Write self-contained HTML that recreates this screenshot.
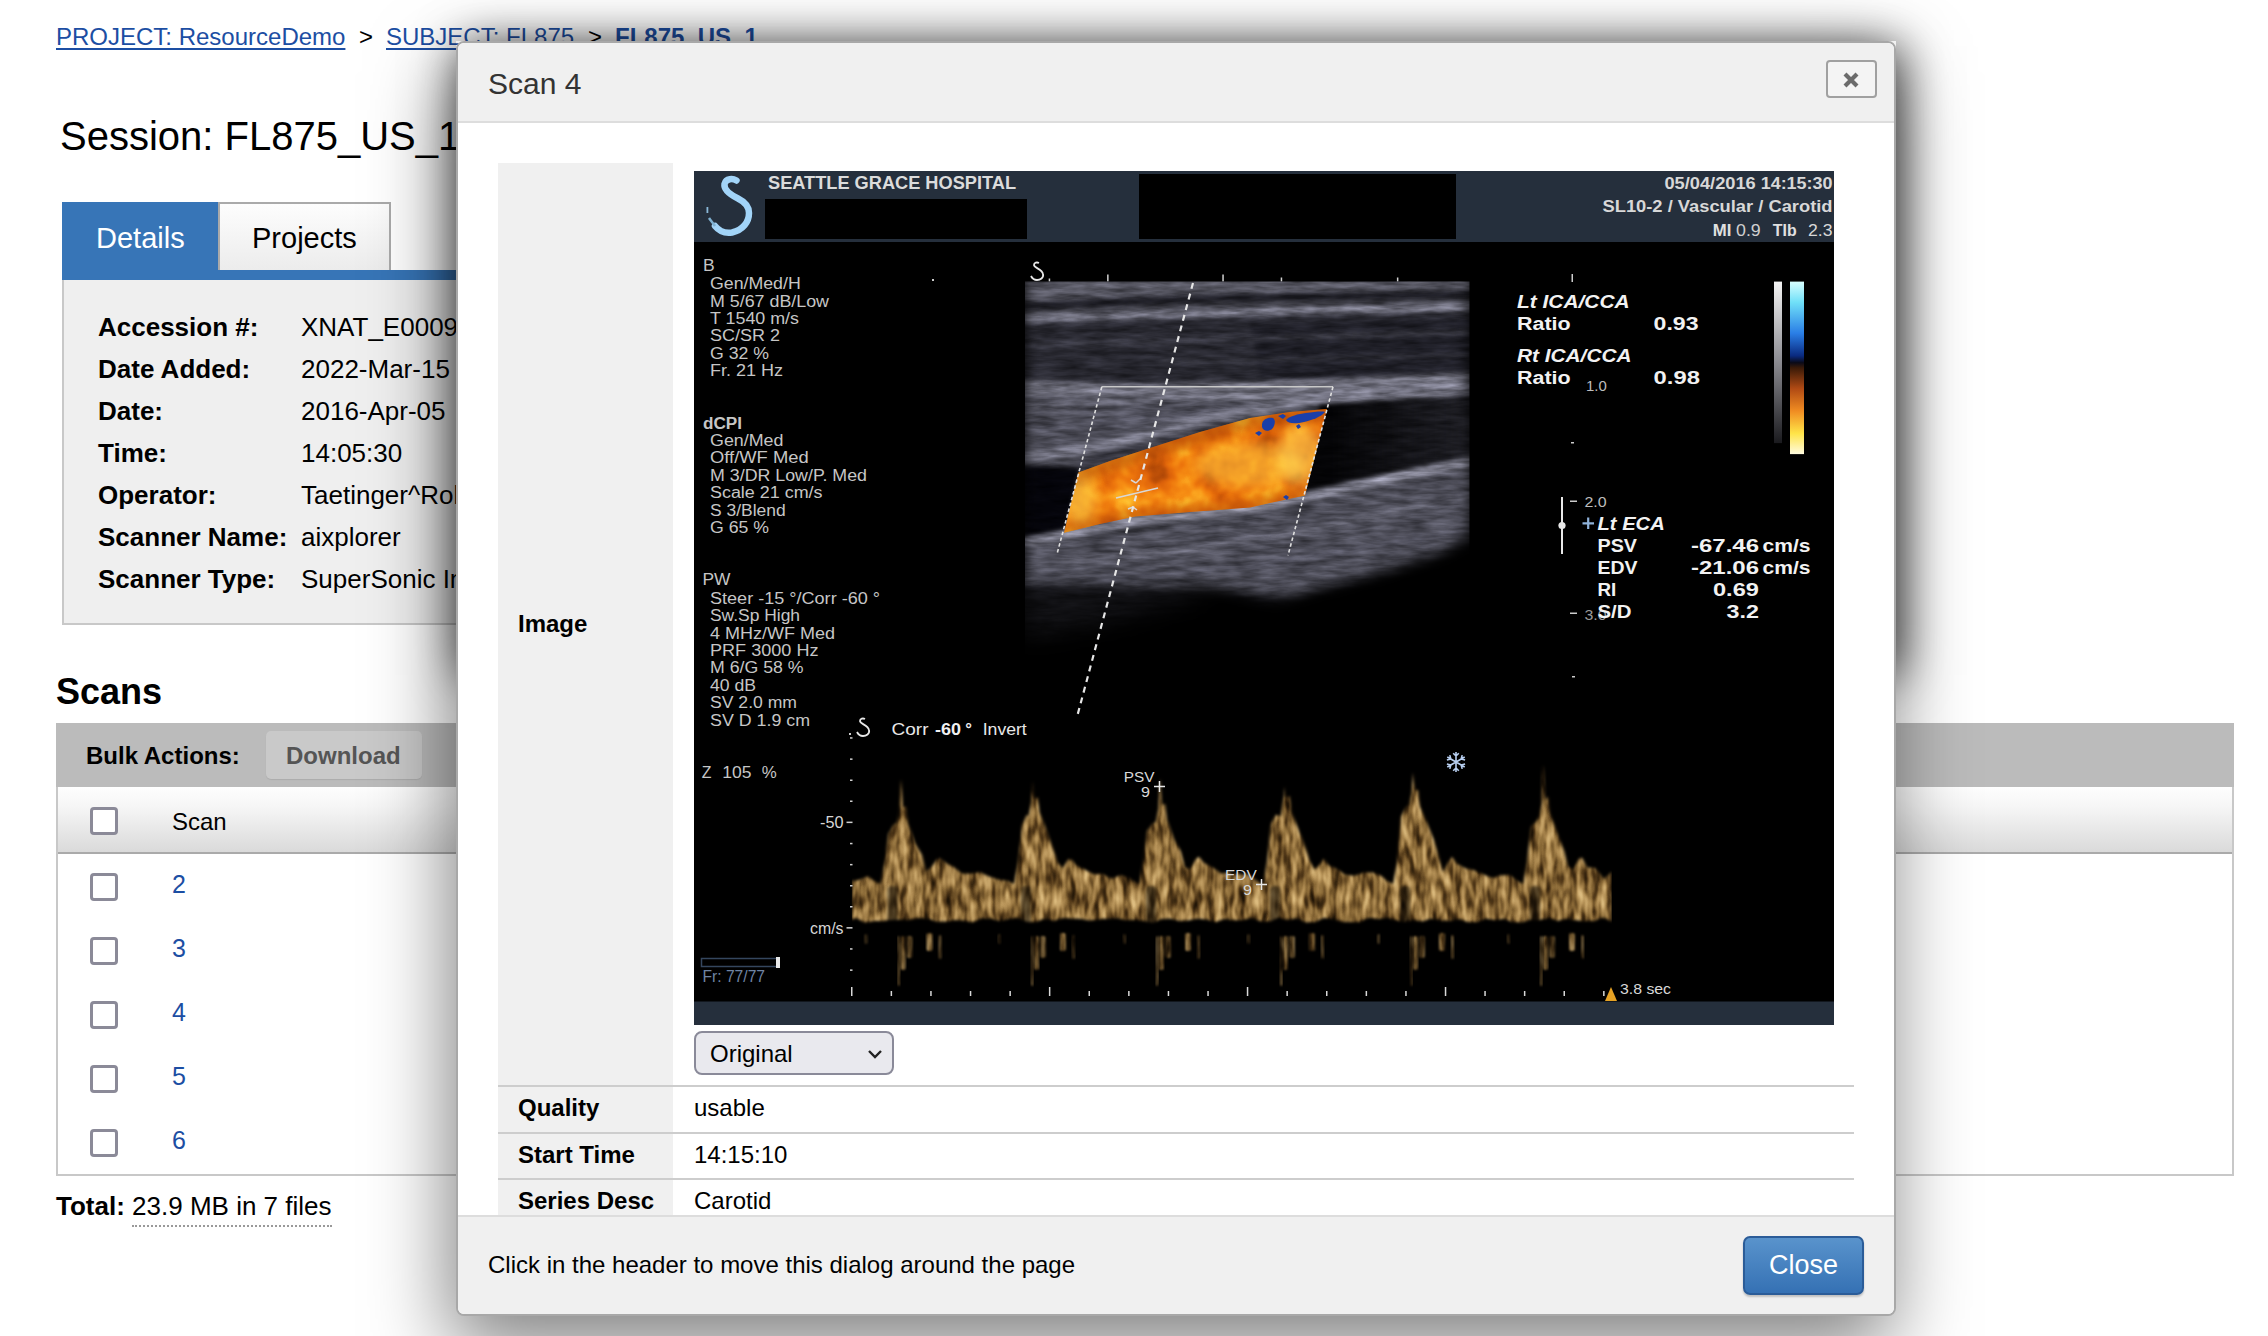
<!DOCTYPE html>
<html><head><meta charset="utf-8">
<style>
html,body{margin:0;padding:0;width:2268px;height:1336px;overflow:hidden;background:#fff;}
body{font-family:"Liberation Sans",sans-serif;color:#000;position:relative;}
.a{position:absolute;white-space:nowrap;}
.lnk{color:#1c4ea3;text-decoration:underline;text-decoration-thickness:2px;text-underline-offset:3px;}
.bc{font-size:24px;line-height:24px;top:25px;}
.lbl{font-weight:bold;font-size:26px;line-height:26px;}
.val{font-size:26px;line-height:26px;}
.cb{position:absolute;left:90px;width:22px;height:22px;border:3px solid #8b8a98;border-radius:4px;background:#fff;}
.rowlnk{position:absolute;left:172px;font-size:25px;line-height:25px;color:#1c4ea3;}
#dlg{position:absolute;left:456px;top:41px;width:1436px;height:1271px;border:2px solid #a8a8a8;border-radius:8px;background:#fff;box-shadow:-6px 30px 80px rgba(0,0,0,0.5);overflow:hidden;}
.dl{font-weight:bold;font-size:24px;line-height:24px;}
.dv{font-size:24px;line-height:24px;}
</style></head><body>
<!-- breadcrumb -->
<div class="a bc" style="left:56px;"><span class="lnk">PROJECT: ResourceDemo</span></div>
<div class="a bc" style="left:359px;">&gt;</div>
<div class="a bc" style="left:386px;"><span class="lnk">SUBJECT: FL875</span></div>
<div class="a bc" style="left:588px;">&gt;</div>
<div class="a bc" style="left:615px;font-weight:bold;color:#1c4ea3;">FL875_US_1</div>

<div class="a" style="left:60px;top:116px;font-size:40px;line-height:40px;">Session: FL875_US_1</div>

<!-- tabs -->
<div class="a" style="left:62px;top:202px;width:156px;height:78px;background:#3775b7;"></div>
<div class="a" style="left:218px;top:270px;width:1600px;height:10px;background:#3775b7;"></div>
<div class="a" style="left:218px;top:202px;width:169px;height:66px;border:2px solid #aaa;border-bottom:none;background:linear-gradient(#fdfdfd,#ececec);"></div>
<div class="a" style="left:96px;top:224px;font-size:29px;line-height:29px;color:#fff;">Details</div>
<div class="a" style="left:252px;top:224px;font-size:29px;line-height:29px;">Projects</div>
<div class="a" style="left:62px;top:280px;width:1700px;height:343px;background:#efefef;border:2px solid #c8c8c8;border-top:none;"></div>
<div class="a lbl" style="left:98px;top:314px;">Accession #:</div>
<div class="a val" style="left:301px;top:314px;">XNAT_E00091</div>
<div class="a lbl" style="left:98px;top:356px;">Date Added:</div>
<div class="a val" style="left:301px;top:356px;">2022-Mar-15</div>
<div class="a lbl" style="left:98px;top:398px;">Date:</div>
<div class="a val" style="left:301px;top:398px;">2016-Apr-05</div>
<div class="a lbl" style="left:98px;top:440px;">Time:</div>
<div class="a val" style="left:301px;top:440px;">14:05:30</div>
<div class="a lbl" style="left:98px;top:482px;">Operator:</div>
<div class="a val" style="left:301px;top:482px;">Taetinger^Robert</div>
<div class="a lbl" style="left:98px;top:524px;">Scanner Name:</div>
<div class="a val" style="left:301px;top:524px;">aixplorer</div>
<div class="a lbl" style="left:98px;top:566px;">Scanner Type:</div>
<div class="a val" style="left:301px;top:566px;">SuperSonic Imagine</div>

<!-- scans -->
<div class="a" style="left:56px;top:674px;font-size:36px;line-height:36px;font-weight:bold;">Scans</div>
<div class="a" style="left:56px;top:723px;width:2178px;height:64px;background:#bbb;"></div>
<div class="a" style="left:86px;top:744px;font-size:24px;line-height:24px;font-weight:bold;">Bulk Actions:</div>
<div class="a" style="left:266px;top:731px;width:156px;height:48px;border-radius:5px;background:#c9c9c9;box-shadow:0 1px 1px rgba(0,0,0,0.08);"></div>
<div class="a" style="left:286px;top:744px;font-size:24px;line-height:24px;font-weight:bold;color:#555;">Download</div>
<div class="a" style="left:56px;top:787px;width:2174px;height:387px;border:2px solid #c8c8c8;border-top:none;"></div>
<div class="a" style="left:58px;top:787px;width:2174px;height:65px;background:linear-gradient(#fefefe,#f6f6f6 30%,#dadada);border-bottom:2px solid #aaa;"></div>
<div class="cb" style="top:807px;"></div>
<div class="a" style="left:172px;top:810px;font-size:24px;line-height:24px;">Scan</div>
<div class="cb" style="top:873px;"></div><div class="rowlnk" style="top:872px;">2</div>
<div class="cb" style="top:937px;"></div><div class="rowlnk" style="top:936px;">3</div>
<div class="cb" style="top:1001px;"></div><div class="rowlnk" style="top:1000px;">4</div>
<div class="cb" style="top:1065px;"></div><div class="rowlnk" style="top:1064px;">5</div>
<div class="cb" style="top:1129px;"></div><div class="rowlnk" style="top:1128px;">6</div>
<div class="a" style="left:56px;top:1193px;font-size:26px;line-height:26px;"><b>Total:</b> <span style="border-bottom:2px dotted #999;padding-bottom:4px;">23.9 MB in 7 files</span></div>

<!-- dialog -->
<div class="a" style="left:456px;top:41px;width:1440px;height:629px;box-shadow:5px 5px 44px rgba(0,0,0,0.75);"></div>
<div id="dlg">
  <div class="a" style="left:0;top:0;width:1436px;height:78px;background:#f0f0f0;border-bottom:2px solid #ddd;"></div><div class="a" style="left:1px;top:1px;">
  <div class="a" style="left:29px;top:25px;font-size:30px;line-height:30px;color:#333;">Scan 4</div>
  <div class="a" style="left:1367px;top:16px;width:47px;height:34px;border:2px solid #a0a0a0;border-radius:4px;background:#f4f4f4;"></div><svg class="a" style="left:1383px;top:27px;" width="18" height="18" viewBox="0 0 18 18"><path d="M3 3 L15 15 M15 3 L3 15" stroke="#6b6b6b" stroke-width="4.2" stroke-linecap="butt"/></svg>
  <div class="a" style="left:39px;top:119px;width:175px;height:1052px;background:#f0f0f0;"></div>
  <div id="us" class="a" style="left:235px;top:127px;width:1140px;height:854px;background:#000;"><svg width="1140" height="854" viewBox="694 171 1140 854" style="display:block">
<defs>
<filter id="bmtex" color-interpolation-filters="sRGB" x="1020" y="276" width="455" height="380" filterUnits="userSpaceOnUse">
<feGaussianBlur in="SourceGraphic" stdDeviation="2.2" result="b"/>
<feTurbulence type="fractalNoise" baseFrequency="0.035 0.18" numOctaves="3" seed="11" result="n"/>
<feColorMatrix in="n" type="matrix" values="1 0 0 0 0  1 0 0 0 0  1 0 0 0 0  0 0 0 0 1" result="g"/>
<feComposite in="b" in2="g" operator="arithmetic" k1="1.0" k2="0.52" k3="0" k4="-0.015"/>
</filter>
<filter id="bmblur" color-interpolation-filters="sRGB" x="1000" y="260" width="500" height="420" filterUnits="userSpaceOnUse"><feGaussianBlur stdDeviation="7"/></filter><filter id="bmblur2" color-interpolation-filters="sRGB" x="1000" y="540" width="260" height="130" filterUnits="userSpaceOnUse"><feGaussianBlur stdDeviation="12"/></filter>
<filter id="vtex" color-interpolation-filters="sRGB" x="1050" y="395" width="290" height="150" filterUnits="userSpaceOnUse">
<feTurbulence type="fractalNoise" baseFrequency="0.035" numOctaves="3" seed="5" result="n0"/>
<feColorMatrix in="n0" type="matrix" values="1 0 0 0 0  1 0 0 0 0  1 0 0 0 0  0 0 0 0 1" result="n"/>
<feComponentTransfer in="n" result="c">
<feFuncR type="table" tableValues="0.55 0.72 0.86 0.93 0.97 1 1"/>
<feFuncG type="table" tableValues="0.2 0.3 0.38 0.46 0.56 0.72 0.88"/>
<feFuncB type="table" tableValues="0.02 0.03 0.04 0.05 0.08 0.16 0.3"/>
<feFuncA type="table" tableValues="1 1"/>
</feComponentTransfer>
<feComposite in="c" in2="SourceGraphic" operator="in"/>
</filter>
<filter id="wtex" color-interpolation-filters="sRGB" x="845" y="755" width="775" height="240" filterUnits="userSpaceOnUse">
<feTurbulence type="fractalNoise" baseFrequency="0.13 0.045" numOctaves="2" seed="3" result="n0"/>
<feColorMatrix in="n0" type="matrix" values="1 0 0 0 0  1 0 0 0 0  1 0 0 0 0  0 0 0 0 1" result="n"/>
<feComponentTransfer in="n" result="c">
<feFuncR type="table" tableValues="0.03 0.14 0.33 0.55 0.72 0.85 0.94"/>
<feFuncG type="table" tableValues="0.02 0.09 0.23 0.42 0.58 0.72 0.82"/>
<feFuncB type="table" tableValues="0 0.03 0.1 0.22 0.35 0.48 0.6"/>
<feFuncA type="table" tableValues="1 1"/>
</feComponentTransfer>
<feComposite in="c" in2="SourceGraphic" operator="in"/>
</filter>
<filter id="soft" color-interpolation-filters="sRGB" x="-20%" y="-20%" width="140%" height="140%"><feGaussianBlur stdDeviation="1.6"/></filter>
<filter id="soft2" color-interpolation-filters="sRGB" x="-20%" y="-20%" width="140%" height="140%"><feGaussianBlur stdDeviation="1"/></filter><filter id="soft3" color-interpolation-filters="sRGB" x="-50%" y="-50%" width="200%" height="200%"><feGaussianBlur stdDeviation="6"/></filter>
<mask id="bmmask" maskUnits="userSpaceOnUse" x="1000" y="260" width="500" height="420">
<rect x="1000" y="260" width="500" height="420" fill="#000"/>
<g filter="url(#bmblur)"><path d="M1025 270 H1469.5 V535 L1440 552 L1380 572 L1330 585 L1275 600 L1240 592 L1200 584 L1140 586 L1080 584 L1025 588 Z" fill="#fff"/></g><g filter="url(#bmblur2)"><path d="M1025 575 L1215 578 L1190 598 L1130 614 L1070 628 L1025 636 Z" fill="#fff" fill-opacity="0.42"/></g>
<rect x="1000" y="260" width="25" height="420" fill="#000"/>
<rect x="1469.5" y="260" width="40" height="420" fill="#000"/>
<rect x="1000" y="260" width="500" height="21.5" fill="#000"/>
</mask>
</defs>
<rect x="694" y="171" width="1140" height="854" fill="#000"/>
<rect x="694" y="171" width="1140" height="71" fill="#252f3c"/>
<rect x="765" y="199" width="262" height="40" fill="#000"/>
<rect x="1139" y="174" width="317" height="65" fill="#000"/>
<rect x="694" y="1001.5" width="1140" height="23.5" fill="#252f3c"/>
<path d="M736.5 180.5 C733 178.5 726 178 724.5 184 C723.5 190 730 194.5 738 198.5 C746 202.5 749 207 749 213 C749 222 743 230 732 232.5 C725 233.5 719 231 715 226" fill="none" stroke="#a2d4f8" stroke-width="6.5" stroke-linecap="round"/><path d="M715 226 C713 223 711 221 709 218" fill="none" stroke="#7fb0d0" stroke-width="2.5"/><rect x="706.5" y="207" width="1.8" height="6" fill="#8ab8d8"/>
<text x="768" y="188.5" font-family="Liberation Sans" font-size="17.5" font-weight="bold" font-style="normal" fill="#dcdcdc" text-anchor="start" textLength="248" lengthAdjust="spacingAndGlyphs">SEATTLE GRACE HOSPITAL</text>
<text x="1664.4" y="188.5" font-family="Liberation Sans" font-size="17" font-weight="bold" font-style="normal" fill="#d8d8d8" text-anchor="start" textLength="91.4" lengthAdjust="spacingAndGlyphs">05/04/2016</text>
<text x="1760.7" y="188.5" font-family="Liberation Sans" font-size="17" font-weight="bold" font-style="normal" fill="#d8d8d8" text-anchor="start" textLength="71.8" lengthAdjust="spacingAndGlyphs">14:15:30</text>
<text x="1602.5" y="212.3" font-family="Liberation Sans" font-size="17" font-weight="bold" font-style="normal" fill="#d8d8d8" text-anchor="start" textLength="230" lengthAdjust="spacingAndGlyphs">SL10-2 / Vascular / Carotid</text>
<text x="1712.7" y="235.8" font-family="Liberation Sans" font-size="17" font-weight="bold" font-style="normal" fill="#e0e0e0" text-anchor="start" textLength="18.6" lengthAdjust="spacingAndGlyphs">MI</text>
<text x="1736" y="235.8" font-family="Liberation Sans" font-size="17" font-weight="normal" font-style="normal" fill="#d0d0d0" text-anchor="start" textLength="24.7" lengthAdjust="spacingAndGlyphs">0.9</text>
<text x="1772.8" y="235.8" font-family="Liberation Sans" font-size="17" font-weight="bold" font-style="normal" fill="#e0e0e0" text-anchor="start" textLength="23.8" lengthAdjust="spacingAndGlyphs">TIb</text>
<text x="1808" y="235.8" font-family="Liberation Sans" font-size="17" font-weight="normal" font-style="normal" fill="#d8d8d8" text-anchor="start" textLength="24.5" lengthAdjust="spacingAndGlyphs">2.3</text>
<text x="703" y="271.3" font-family="Liberation Sans" font-size="16" font-weight="normal" font-style="normal" fill="#c6c6c6" text-anchor="start" textLength="11.7" lengthAdjust="spacingAndGlyphs">B</text>
<text x="710" y="289.3" font-family="Liberation Sans" font-size="16" font-weight="normal" font-style="normal" fill="#c6c6c6" text-anchor="start" textLength="90.7" lengthAdjust="spacingAndGlyphs">Gen/Med/H</text>
<text x="710" y="306.6" font-family="Liberation Sans" font-size="16" font-weight="normal" font-style="normal" fill="#c6c6c6" text-anchor="start" textLength="119" lengthAdjust="spacingAndGlyphs">M 5/67 dB/Low</text>
<text x="710" y="323.9" font-family="Liberation Sans" font-size="16" font-weight="normal" font-style="normal" fill="#c6c6c6" text-anchor="start" textLength="89" lengthAdjust="spacingAndGlyphs">T 1540 m/s</text>
<text x="710" y="341.2" font-family="Liberation Sans" font-size="16" font-weight="normal" font-style="normal" fill="#c6c6c6" text-anchor="start" textLength="70" lengthAdjust="spacingAndGlyphs">SC/SR 2</text>
<text x="710" y="358.5" font-family="Liberation Sans" font-size="16" font-weight="normal" font-style="normal" fill="#c6c6c6" text-anchor="start" textLength="59" lengthAdjust="spacingAndGlyphs">G 32 %</text>
<text x="710" y="375.8" font-family="Liberation Sans" font-size="16" font-weight="normal" font-style="normal" fill="#c6c6c6" text-anchor="start" textLength="73" lengthAdjust="spacingAndGlyphs">Fr. 21 Hz</text>
<text x="703" y="428.6" font-family="Liberation Sans" font-size="16" font-weight="bold" font-style="normal" fill="#c6c6c6" text-anchor="start" textLength="39" lengthAdjust="spacingAndGlyphs">dCPI</text>
<text x="710" y="446" font-family="Liberation Sans" font-size="16" font-weight="normal" font-style="normal" fill="#c6c6c6" text-anchor="start" textLength="73.4" lengthAdjust="spacingAndGlyphs">Gen/Med</text>
<text x="710" y="463.4" font-family="Liberation Sans" font-size="16" font-weight="normal" font-style="normal" fill="#c6c6c6" text-anchor="start" textLength="98.6" lengthAdjust="spacingAndGlyphs">Off/WF Med</text>
<text x="710" y="480.8" font-family="Liberation Sans" font-size="16" font-weight="normal" font-style="normal" fill="#c6c6c6" text-anchor="start" textLength="157" lengthAdjust="spacingAndGlyphs">M 3/DR Low/P. Med</text>
<text x="710" y="498.2" font-family="Liberation Sans" font-size="16" font-weight="normal" font-style="normal" fill="#c6c6c6" text-anchor="start" textLength="112.5" lengthAdjust="spacingAndGlyphs">Scale 21 cm/s</text>
<text x="710" y="515.6" font-family="Liberation Sans" font-size="16" font-weight="normal" font-style="normal" fill="#c6c6c6" text-anchor="start" textLength="75.7" lengthAdjust="spacingAndGlyphs">S 3/Blend</text>
<text x="710" y="533.0" font-family="Liberation Sans" font-size="16" font-weight="normal" font-style="normal" fill="#c6c6c6" text-anchor="start" textLength="59" lengthAdjust="spacingAndGlyphs">G 65 %</text>
<text x="702.5" y="585" font-family="Liberation Sans" font-size="16" font-weight="normal" font-style="normal" fill="#c6c6c6" text-anchor="start" textLength="28" lengthAdjust="spacingAndGlyphs">PW</text>
<text x="710" y="603.6" font-family="Liberation Sans" font-size="16" font-weight="normal" font-style="normal" fill="#c6c6c6" text-anchor="start" textLength="170" lengthAdjust="spacingAndGlyphs">Steer -15 °/Corr -60 °</text>
<text x="710" y="621.1" font-family="Liberation Sans" font-size="16" font-weight="normal" font-style="normal" fill="#c6c6c6" text-anchor="start" textLength="90" lengthAdjust="spacingAndGlyphs">Sw.Sp High</text>
<text x="710" y="638.5" font-family="Liberation Sans" font-size="16" font-weight="normal" font-style="normal" fill="#c6c6c6" text-anchor="start" textLength="125" lengthAdjust="spacingAndGlyphs">4 MHz/WF Med</text>
<text x="710" y="656.0" font-family="Liberation Sans" font-size="16" font-weight="normal" font-style="normal" fill="#c6c6c6" text-anchor="start" textLength="108.5" lengthAdjust="spacingAndGlyphs">PRF 3000 Hz</text>
<text x="710" y="673.4" font-family="Liberation Sans" font-size="16" font-weight="normal" font-style="normal" fill="#c6c6c6" text-anchor="start" textLength="93.5" lengthAdjust="spacingAndGlyphs">M 6/G 58 %</text>
<text x="710" y="690.9" font-family="Liberation Sans" font-size="16" font-weight="normal" font-style="normal" fill="#c6c6c6" text-anchor="start" textLength="46" lengthAdjust="spacingAndGlyphs">40 dB</text>
<text x="710" y="708.3" font-family="Liberation Sans" font-size="16" font-weight="normal" font-style="normal" fill="#c6c6c6" text-anchor="start" textLength="87" lengthAdjust="spacingAndGlyphs">SV 2.0 mm</text>
<text x="710" y="725.8" font-family="Liberation Sans" font-size="16" font-weight="normal" font-style="normal" fill="#c6c6c6" text-anchor="start" textLength="100" lengthAdjust="spacingAndGlyphs">SV D 1.9 cm</text>
<text x="701.8" y="777.6" font-family="Liberation Sans" font-size="16" font-weight="normal" font-style="normal" fill="#c6c6c6" text-anchor="start" textLength="9.7" lengthAdjust="spacingAndGlyphs">Z</text>
<text x="722.2" y="777.6" font-family="Liberation Sans" font-size="16" font-weight="normal" font-style="normal" fill="#c6c6c6" text-anchor="start" textLength="29.2" lengthAdjust="spacingAndGlyphs">105</text>
<text x="761.7" y="777.6" font-family="Liberation Sans" font-size="16" font-weight="normal" font-style="normal" fill="#c6c6c6" text-anchor="start" textLength="15" lengthAdjust="spacingAndGlyphs">%</text>
<text x="702.5" y="981.6" font-family="Liberation Sans" font-size="16" font-weight="normal" font-style="normal" fill="#6f84a4" text-anchor="start" textLength="62.5" lengthAdjust="spacingAndGlyphs">Fr: 77/77</text>
<rect x="701.5" y="958.5" width="77" height="8" fill="none" stroke="#34465e" stroke-width="1.5"/>
<rect x="776" y="957" width="4" height="11" fill="#e8e8e8"/>
<text x="1517" y="308" font-family="Liberation Sans" font-size="18" font-weight="bold" font-style="italic" fill="#f2f2f2" text-anchor="start" textLength="112.6" lengthAdjust="spacingAndGlyphs">Lt ICA/CCA</text>
<text x="1517" y="330" font-family="Liberation Sans" font-size="18" font-weight="bold" font-style="normal" fill="#f2f2f2" text-anchor="start" textLength="53.6" lengthAdjust="spacingAndGlyphs">Ratio</text>
<text x="1653.6" y="330" font-family="Liberation Sans" font-size="18" font-weight="bold" font-style="normal" fill="#f2f2f2" text-anchor="start" textLength="45" lengthAdjust="spacingAndGlyphs">0.93</text>
<text x="1517" y="362" font-family="Liberation Sans" font-size="18" font-weight="bold" font-style="italic" fill="#f2f2f2" text-anchor="start" textLength="114.5" lengthAdjust="spacingAndGlyphs">Rt ICA/CCA</text>
<text x="1517" y="384" font-family="Liberation Sans" font-size="18" font-weight="bold" font-style="normal" fill="#f2f2f2" text-anchor="start" textLength="53.6" lengthAdjust="spacingAndGlyphs">Ratio</text>
<text x="1653.6" y="384" font-family="Liberation Sans" font-size="18" font-weight="bold" font-style="normal" fill="#f2f2f2" text-anchor="start" textLength="46.3" lengthAdjust="spacingAndGlyphs">0.98</text>
<text x="1586" y="391" font-family="Liberation Sans" font-size="14" font-weight="normal" font-style="normal" fill="#bdbdbd" text-anchor="start" textLength="20.8" lengthAdjust="spacingAndGlyphs">1.0</text>
<rect x="1571.5" y="274" width="1.5" height="8" fill="#ccc"/>
<rect x="1571" y="442" width="3" height="1.5" fill="#ccc"/>
<rect x="1570" y="500.5" width="7" height="1.5" fill="#ccc"/>
<text x="1584.4" y="506.7" font-family="Liberation Sans" font-size="14" font-weight="normal" font-style="normal" fill="#bdbdbd" text-anchor="start" textLength="22.2" lengthAdjust="spacingAndGlyphs">2.0</text>
<rect x="1561" y="497" width="2" height="57" fill="#e8e8e8"/>
<circle cx="1562" cy="525.5" r="3.6" fill="#e8e8e8"/>
<path d="M1582.5 523.3 H1594 M1588.2 517.5 V529" stroke="#8fb2da" stroke-width="2.2"/>
<text x="1597.5" y="530.2" font-family="Liberation Sans" font-size="18" font-weight="bold" font-style="italic" fill="#f2f2f2" text-anchor="start" textLength="67.2" lengthAdjust="spacingAndGlyphs">Lt ECA</text>
<text x="1597.5" y="551.8" font-family="Liberation Sans" font-size="18" font-weight="bold" font-style="normal" fill="#f2f2f2" text-anchor="start" textLength="39.5" lengthAdjust="spacingAndGlyphs">PSV</text>
<text x="1691" y="551.8" font-family="Liberation Sans" font-size="18" font-weight="bold" font-style="normal" fill="#f2f2f2" text-anchor="start" textLength="68" lengthAdjust="spacingAndGlyphs">-67.46</text>
<text x="1762.5" y="551.8" font-family="Liberation Sans" font-size="18" font-weight="bold" font-style="normal" fill="#f2f2f2" text-anchor="start" textLength="48" lengthAdjust="spacingAndGlyphs">cm/s</text>
<text x="1597.5" y="574" font-family="Liberation Sans" font-size="18" font-weight="bold" font-style="normal" fill="#f2f2f2" text-anchor="start" textLength="40" lengthAdjust="spacingAndGlyphs">EDV</text>
<text x="1691" y="574" font-family="Liberation Sans" font-size="18" font-weight="bold" font-style="normal" fill="#f2f2f2" text-anchor="start" textLength="68" lengthAdjust="spacingAndGlyphs">-21.06</text>
<text x="1762.5" y="574" font-family="Liberation Sans" font-size="18" font-weight="bold" font-style="normal" fill="#f2f2f2" text-anchor="start" textLength="48" lengthAdjust="spacingAndGlyphs">cm/s</text>
<text x="1597.5" y="595.6" font-family="Liberation Sans" font-size="18" font-weight="bold" font-style="normal" fill="#f2f2f2" text-anchor="start" textLength="18.8" lengthAdjust="spacingAndGlyphs">RI</text>
<text x="1713" y="595.6" font-family="Liberation Sans" font-size="18" font-weight="bold" font-style="normal" fill="#f2f2f2" text-anchor="start" textLength="45.9" lengthAdjust="spacingAndGlyphs">0.69</text>
<rect x="1570" y="612.5" width="7" height="1.5" fill="#ccc"/>
<text x="1584.4" y="620" font-family="Liberation Sans" font-size="14" font-weight="normal" font-style="normal" fill="#9a9a9a" text-anchor="start" textLength="22.2" lengthAdjust="spacingAndGlyphs">3.0</text>
<text x="1597.5" y="617.5" font-family="Liberation Sans" font-size="18" font-weight="bold" font-style="normal" fill="#f2f2f2" text-anchor="start" textLength="34" lengthAdjust="spacingAndGlyphs">S/D</text>
<text x="1726.5" y="617.5" font-family="Liberation Sans" font-size="18" font-weight="bold" font-style="normal" fill="#f2f2f2" text-anchor="start" textLength="32.4" lengthAdjust="spacingAndGlyphs">3.2</text>
<rect x="1572" y="676" width="3" height="1.5" fill="#ccc"/>
<defs><linearGradient id="gbar" x1="0" y1="0" x2="0" y2="1">
<stop offset="0" stop-color="#f4f4f4"/><stop offset="0.5" stop-color="#8a8a90"/><stop offset="1" stop-color="#1a1a1e"/></linearGradient>
<linearGradient id="cbar" x1="0" y1="0" x2="0" y2="1">
<stop offset="0" stop-color="#d8ffff"/><stop offset="0.12" stop-color="#70e0f8"/><stop offset="0.3" stop-color="#2a7ee6"/>
<stop offset="0.43" stop-color="#0a2a80"/><stop offset="0.47" stop-color="#0a0a18"/><stop offset="0.5" stop-color="#3a1a08"/>
<stop offset="0.62" stop-color="#b04a14"/><stop offset="0.75" stop-color="#f08c22"/><stop offset="0.88" stop-color="#ffe448"/><stop offset="1" stop-color="#fffbe0"/></linearGradient></defs>
<rect x="1774" y="281.6" width="8" height="161.5" fill="url(#gbar)"/>
<rect x="1790" y="281.6" width="14" height="172.5" fill="url(#cbar)"/>
<rect x="1048.7" y="278.5" width="1.5" height="3" fill="#d0d0d0"/>
<rect x="1107.1" y="274.5" width="1.5" height="7" fill="#d0d0d0"/>
<rect x="1222.3" y="274.5" width="1.5" height="7" fill="#d0d0d0"/>
<rect x="1280.7" y="277.5" width="1.5" height="4" fill="#d0d0d0"/>
<rect x="1396.8999999999999" y="277.5" width="1.5" height="4" fill="#d0d0d0"/>
<rect x="932" y="279" width="2" height="2" fill="#ccc"/>
<path d="M1039 263 C1037 262 1034 262.5 1034 265 C1034 268 1042 269 1043 274 C1044 278 1040 280 1037 280 C1034 280 1032 278 1031 276" fill="none" stroke="#e8e8e8" stroke-width="1.8"/>
<g mask="url(#bmmask)"><g filter="url(#bmtex)">
<rect x="1000" y="260" width="500" height="420" fill="rgb(60,60,68)"/>
<path d="M1020 276 L1480 276 L1480 294 L1210 297 L1020 302 Z" fill="rgb(86,86,97)" fill-opacity="1"/>
<path d="M1020 322 L1180 318 L1480 311 L1480 378 L1300 382 L1150 386 L1020 384 Z" fill="rgb(43,43,51)" fill-opacity="1"/>
<path d="M1250 325 L1480 318 L1480 372 L1260 378 Z" fill="rgb(32,32,40)" fill-opacity="0.8"/>
<path d="M1020 306 L1210 298 L1480 294" fill="none" stroke="rgb(30,30,37)" stroke-width="7" stroke-opacity="1" stroke-linejoin="round"/>
<path d="M1020 319 L1180 314 L1480 307" fill="none" stroke="rgb(120,120,135)" stroke-width="8" stroke-opacity="1" stroke-linejoin="round"/>
<path d="M1030 345 L1200 340 L1470 332" fill="none" stroke="rgb(68,68,79)" stroke-width="5" stroke-opacity="0.7" stroke-linejoin="round"/>
<path d="M1160 362 L1470 355" fill="none" stroke="rgb(67,67,77)" stroke-width="4" stroke-opacity="0.6" stroke-linejoin="round"/>
<path d="M1020 380 L1150 384 L1300 380 L1480 372 L1480 396 L1330 404 L1150 398 L1020 396 Z" fill="rgb(110,110,123)" fill-opacity="1"/>
<path d="M1020 396 L1150 398 L1330 404 L1300 412 L1200 428 L1100 448 L1020 460 Z" fill="rgb(79,79,90)" fill-opacity="1"/>
<path d="M1025 407 L1120 402 L1210 396" fill="none" stroke="rgb(107,107,121)" stroke-width="6" stroke-opacity="0.8" stroke-linejoin="round"/>
<path d="M1025 430 L1150 418 L1250 406" fill="none" stroke="rgb(94,94,107)" stroke-width="5" stroke-opacity="0.6" stroke-linejoin="round"/>
<path d="M1020 458 L1102 447 L1200 420 L1330 396 L1480 384" fill="none" stroke="rgb(120,120,135)" stroke-width="11" stroke-opacity="1" stroke-linejoin="round"/>
<path d="M1078 470 L1150 452 L1250 423 L1330 407 L1320 404 L1100 452 L1078 462 Z" fill="rgb(60,60,70)" fill-opacity="1"/>
<path d="M1020 466 L1080 468 L1064 536 L1020 540 Z" fill="rgb(8,8,14)" fill-opacity="1"/>
<defs><linearGradient id="lumg" gradientUnits="userSpaceOnUse" x1="1330" y1="0" x2="1470" y2="0"><stop offset="0" stop-color="rgb(8,8,10)"/><stop offset="1" stop-color="rgb(34,34,40)"/></linearGradient></defs>
<path d="M1320 404 L1400 399 L1480 394 L1480 457 L1400 472 L1330 490 L1300 500 Z" fill="url(#lumg)"/>
<path d="M1020 543 L1063 535 L1135 520 L1250 508 L1300 498 L1400 476 L1480 460" fill="none" stroke="rgb(129,129,144)" stroke-width="10" stroke-opacity="1" stroke-linejoin="round"/>
<path d="M1020 549 L1150 530 L1300 505 L1480 466 L1480 560 L1400 585 L1300 600 L1150 590 L1020 588 Z" fill="rgb(79,79,90)" fill-opacity="1"/>
<path d="M1060 562 L1200 548 L1320 528 L1470 496" fill="none" stroke="rgb(103,103,116)" stroke-width="6" stroke-opacity="0.8" stroke-linejoin="round"/>
<path d="M1080 582 L1250 566 L1470 530" fill="none" stroke="rgb(92,92,105)" stroke-width="5" stroke-opacity="0.6" stroke-linejoin="round"/>
<path d="M1020 585 L1150 590 L1300 600 L1480 560 L1480 680 L1020 680 Z" fill="rgb(43,43,51)" fill-opacity="1"/>
</g></g>
<defs><clipPath id="vclip"><path d="M1078.4 472.5 L1110 461 L1150 448 L1200 432 L1250 418 L1290 412 L1327 409 L1305 495.5 L1270 503 L1250 507.6 L1190 512 L1135 516.6 L1100 524 L1064 532.7 Z"/></clipPath></defs>
<g filter="url(#vtex)"><path d="M1078.4 472.5 L1110 461 L1150 448 L1200 432 L1250 418 L1290 412 L1327 409 L1305 495.5 L1270 503 L1250 507.6 L1190 512 L1135 516.6 L1100 524 L1064 532.7 Z" fill="#fff"/></g>
<g clip-path="url(#vclip)">
<ellipse cx="1250" cy="465" rx="55" ry="22" fill="#ffd84a" opacity="0.45" filter="url(#soft3)"/>
<ellipse cx="1300" cy="455" rx="22" ry="30" fill="#ffe060" opacity="0.5" filter="url(#soft3)"/>
<ellipse cx="1080" cy="500" rx="16" ry="26" fill="#ffe050" opacity="0.55" filter="url(#soft3)"/>
<path d="M1076 476 L1150 451 L1250 421 L1330 412" stroke="#8a3a08" stroke-width="9" fill="none" opacity="0.55" filter="url(#soft3)"/>
<path d="M1062 532 L1135 516 L1250 507 L1306 494" stroke="#8a3a08" stroke-width="8" fill="none" opacity="0.5" filter="url(#soft3)"/>
</g>
<path d="M1262 424 C1263 419 1268 417 1273 418 C1276 420 1275 426 1272 429 C1268 432 1263 431 1262 427 Z" fill="#1a3faa"/>
<path d="M1286 420 C1290 416 1298 414 1306 413 C1314 412 1322 411 1325 412 C1321 417 1312 420 1304 422 C1296 424 1288 424 1286 420 Z" fill="#1a3faa"/>
<path d="M1278 416 l5 -2 l3 2 l-3 3 z" fill="#1a3faa"/>
<path d="M1255 433 l4 -2 l3 2 l-3 3 z" fill="#1a3faa"/>
<path d="M1283 497 l3 -2 l3 2 l-2 3 z" fill="#1a3faa"/>
<path d="M1296 426 l3 -2 l2 3 l-3 2 z" fill="#1a3faa"/>
<path d="M1116 498 L1158 488" stroke="#d8d8d8" stroke-width="1.5"/>
<path d="M1136 483 l-5 -3 M1136 483 l4 -4 M1133 507 l-5 2 M1133 507 l4 3" stroke="#d8d8d8" stroke-width="1.5"/>
<path d="M1101.8 386.8 H1333" stroke="#c8c8c8" stroke-width="1.5" fill="none"/>
<path d="M1101.8 386.8 L1057 554 M1333 386.8 L1288 555.4" stroke="#e0e0e0" stroke-width="1.6" stroke-dasharray="3.5 2.5" fill="none"/>
<path d="M1193 283 L1077 717" stroke="#e6e6e6" stroke-width="2.2" stroke-dasharray="6 5" fill="none"/>
<defs><mask id="wmask" maskUnits="userSpaceOnUse" x="840" y="740" width="790" height="260"><rect x="840" y="740" width="790" height="260" fill="#000"/>
<path d="M851.8 881.0 L859.8 879.8 L867.8 876.2 L874.5 881.0 L880.5 884.0 L884.5 862.0 L888.5 834.0 L893.5 824.9 L897.0 822.6 L899.5 811.0 L900.5 787.0 L901.0 779.0 L901.8 789.0 L903.0 808.0 L906.0 806.2 L908.0 822.9 L915.0 843.0 L922.0 854.9 L926.0 871.6 L931.0 867.6 L937.0 859.6 L940.0 858.0 L945.0 862.6 L953.0 866.5 L962.0 873.4 L971.0 873.7 L980.0 872.3 L989.0 876.4 L998.0 879.4 L1008.0 881.0 L1014.0 884.0 L1018.0 862.0 L1022.0 825.0 L1027.0 814.5 L1028.6 816.5 L1031.1 802.0 L1032.1 789.0 L1032.6 781.0 L1033.4 791.0 L1034.6 799.0 L1037.6 797.0 L1039.6 812.2 L1046.6 830.3 L1053.6 850.3 L1057.6 862.2 L1062.6 868.0 L1068.6 859.0 L1071.6 859.7 L1076.6 865.5 L1084.6 869.5 L1093.6 874.2 L1102.6 873.9 L1111.6 878.8 L1120.6 875.3 L1129.6 878.0 L1133.0 881.0 L1139.0 884.0 L1143.0 862.0 L1147.0 831.0 L1152.0 824.6 L1156.0 821.6 L1158.5 808.0 L1159.5 786.0 L1160.0 778.0 L1160.8 788.0 L1162.0 805.0 L1165.0 803.8 L1167.0 819.4 L1174.0 839.0 L1181.0 851.7 L1185.0 867.6 L1190.0 868.9 L1196.0 858.9 L1199.0 856.7 L1204.0 863.0 L1212.0 866.9 L1221.0 873.5 L1230.0 872.7 L1239.0 874.2 L1248.0 874.3 L1257.0 881.0 L1263.0 884.0 L1267.0 862.0 L1271.0 824.0 L1276.0 814.8 L1280.6 816.2 L1283.1 801.0 L1284.1 794.8 L1284.6 786.8 L1285.4 796.8 L1286.6 798.0 L1289.6 795.7 L1291.6 812.5 L1298.6 829.4 L1305.6 848.1 L1309.6 860.3 L1314.6 869.4 L1320.6 863.4 L1323.6 858.7 L1328.6 865.3 L1336.6 868.9 L1345.6 875.0 L1354.6 875.8 L1363.6 872.7 L1372.6 872.4 L1381.6 875.9 L1387.0 881.0 L1393.0 884.0 L1397.0 862.0 L1401.0 816.5 L1406.0 807.3 L1409.0 805.1 L1411.5 793.5 L1412.5 780.3 L1413.0 772.3 L1413.8 782.3 L1415.0 790.5 L1418.0 789.7 L1420.0 806.4 L1427.0 822.6 L1434.0 840.3 L1438.0 854.0 L1443.0 872.1 L1449.0 860.8 L1452.0 856.8 L1457.0 863.7 L1465.0 868.3 L1474.0 870.3 L1483.0 874.2 L1492.0 877.9 L1501.0 875.2 L1510.0 875.0 L1517.0 881.0 L1523.0 884.0 L1527.0 862.0 L1531.0 827.0 L1536.0 821.5 L1539.0 817.0 L1541.5 804.0 L1542.5 773.0 L1543.0 765.0 L1543.8 775.0 L1545.0 801.0 L1548.0 796.0 L1550.0 812.7 L1557.0 832.0 L1564.0 850.6 L1568.0 866.5 L1573.0 869.6 L1579.0 858.8 L1582.0 857.4 L1587.0 867.5 L1595.0 868.1 L1604.0 879.1 L1611.8 872.0 L1611.8 921.8 L1602.8 917.6 L1593.8 921.1 L1584.8 920.9 L1575.8 920.2 L1566.8 918.8 L1557.8 920.7 L1548.8 918.1 L1539.8 919.7 L1530.8 919.8 L1521.8 922.3 L1512.8 921.9 L1503.8 918.8 L1494.8 920.0 L1485.8 918.4 L1476.8 922.1 L1467.8 921.9 L1458.8 919.0 L1449.8 920.7 L1440.8 920.5 L1431.8 918.3 L1422.8 921.3 L1413.8 920.2 L1404.8 921.4 L1395.8 920.2 L1386.8 917.5 L1377.8 919.1 L1368.8 917.6 L1359.8 922.1 L1350.8 921.9 L1341.8 921.7 L1332.8 919.0 L1323.8 917.8 L1314.8 921.9 L1305.8 922.2 L1296.8 917.9 L1287.8 919.9 L1278.8 917.8 L1269.8 921.3 L1260.8 921.3 L1251.8 918.1 L1242.8 919.9 L1233.8 920.2 L1224.8 918.8 L1215.8 921.9 L1206.8 919.6 L1197.8 918.6 L1188.8 920.2 L1179.8 921.1 L1170.8 918.5 L1161.8 919.1 L1152.8 922.5 L1143.8 920.7 L1134.8 919.7 L1125.8 920.1 L1116.8 918.1 L1107.8 918.6 L1098.8 919.2 L1089.8 920.4 L1080.8 918.7 L1071.8 918.6 L1062.8 917.9 L1053.8 920.7 L1044.8 918.6 L1035.8 922.0 L1026.8 921.8 L1017.8 917.9 L1008.8 918.7 L999.8 920.8 L990.8 918.6 L981.8 918.2 L972.8 922.2 L963.8 920.4 L954.8 919.9 L945.8 921.4 L936.8 921.5 L927.8 918.5 L918.8 918.0 L909.8 919.7 L900.8 919.6 L891.8 919.8 L882.8 921.1 L873.8 920.9 L864.8 922.4 L855.8 918.0 L851.8 920.0 Z" fill="#fff" filter="url(#soft)"/>
<rect x="887.5" y="886" width="10" height="40" rx="4" fill="#000" filter="url(#soft)" opacity="0.5"/>
<rect x="1021" y="886" width="10" height="40" rx="4" fill="#000" filter="url(#soft)" opacity="0.5"/>
<rect x="1146" y="886" width="10" height="40" rx="4" fill="#000" filter="url(#soft)" opacity="0.5"/>
<rect x="1270" y="886" width="10" height="40" rx="4" fill="#000" filter="url(#soft)" opacity="0.5"/>
<rect x="1400" y="886" width="10" height="40" rx="4" fill="#000" filter="url(#soft)" opacity="0.5"/>
<rect x="1530" y="886" width="10" height="40" rx="4" fill="#000" filter="url(#soft)" opacity="0.5"/>
<rect x="864.5" y="934" width="3" height="10" rx="2" fill="#fff" opacity="0.4" filter="url(#soft2)"/>
<rect x="900.5" y="936" width="5" height="34" rx="2" fill="#fff" opacity="0.75" filter="url(#soft2)"/>
<rect x="906.5" y="936" width="6" height="22" rx="2" fill="#fff" opacity="0.6" filter="url(#soft2)"/>
<rect x="897.5" y="936" width="2.5" height="50" rx="2" fill="#fff" opacity="0.55" filter="url(#soft2)"/>
<rect x="926.5" y="933" width="6" height="18" rx="2" fill="#fff" opacity="0.8" filter="url(#soft2)"/>
<rect x="938.5" y="935" width="3" height="24" rx="2" fill="#fff" opacity="0.5" filter="url(#soft2)"/>
<rect x="998" y="934" width="3" height="10" rx="2" fill="#fff" opacity="0.4" filter="url(#soft2)"/>
<rect x="1034" y="936" width="5" height="34" rx="2" fill="#fff" opacity="0.75" filter="url(#soft2)"/>
<rect x="1040" y="936" width="6" height="22" rx="2" fill="#fff" opacity="0.6" filter="url(#soft2)"/>
<rect x="1031" y="936" width="2.5" height="50" rx="2" fill="#fff" opacity="0.55" filter="url(#soft2)"/>
<rect x="1060" y="933" width="6" height="18" rx="2" fill="#fff" opacity="0.8" filter="url(#soft2)"/>
<rect x="1072" y="935" width="3" height="24" rx="2" fill="#fff" opacity="0.5" filter="url(#soft2)"/>
<rect x="1123" y="934" width="3" height="10" rx="2" fill="#fff" opacity="0.4" filter="url(#soft2)"/>
<rect x="1159" y="936" width="5" height="34" rx="2" fill="#fff" opacity="0.75" filter="url(#soft2)"/>
<rect x="1165" y="936" width="6" height="22" rx="2" fill="#fff" opacity="0.6" filter="url(#soft2)"/>
<rect x="1156" y="936" width="2.5" height="50" rx="2" fill="#fff" opacity="0.55" filter="url(#soft2)"/>
<rect x="1185" y="933" width="6" height="18" rx="2" fill="#fff" opacity="0.8" filter="url(#soft2)"/>
<rect x="1197" y="935" width="3" height="24" rx="2" fill="#fff" opacity="0.5" filter="url(#soft2)"/>
<rect x="1247" y="934" width="3" height="10" rx="2" fill="#fff" opacity="0.4" filter="url(#soft2)"/>
<rect x="1283" y="936" width="5" height="34" rx="2" fill="#fff" opacity="0.75" filter="url(#soft2)"/>
<rect x="1289" y="936" width="6" height="22" rx="2" fill="#fff" opacity="0.6" filter="url(#soft2)"/>
<rect x="1280" y="936" width="2.5" height="50" rx="2" fill="#fff" opacity="0.55" filter="url(#soft2)"/>
<rect x="1309" y="933" width="6" height="18" rx="2" fill="#fff" opacity="0.8" filter="url(#soft2)"/>
<rect x="1321" y="935" width="3" height="24" rx="2" fill="#fff" opacity="0.5" filter="url(#soft2)"/>
<rect x="1377" y="934" width="3" height="10" rx="2" fill="#fff" opacity="0.4" filter="url(#soft2)"/>
<rect x="1413" y="936" width="5" height="34" rx="2" fill="#fff" opacity="0.75" filter="url(#soft2)"/>
<rect x="1419" y="936" width="6" height="22" rx="2" fill="#fff" opacity="0.6" filter="url(#soft2)"/>
<rect x="1410" y="936" width="2.5" height="50" rx="2" fill="#fff" opacity="0.55" filter="url(#soft2)"/>
<rect x="1439" y="933" width="6" height="18" rx="2" fill="#fff" opacity="0.8" filter="url(#soft2)"/>
<rect x="1451" y="935" width="3" height="24" rx="2" fill="#fff" opacity="0.5" filter="url(#soft2)"/>
<rect x="1507" y="934" width="3" height="10" rx="2" fill="#fff" opacity="0.4" filter="url(#soft2)"/>
<rect x="1543" y="936" width="5" height="34" rx="2" fill="#fff" opacity="0.75" filter="url(#soft2)"/>
<rect x="1549" y="936" width="6" height="22" rx="2" fill="#fff" opacity="0.6" filter="url(#soft2)"/>
<rect x="1540" y="936" width="2.5" height="50" rx="2" fill="#fff" opacity="0.55" filter="url(#soft2)"/>
<rect x="1569" y="933" width="6" height="18" rx="2" fill="#fff" opacity="0.8" filter="url(#soft2)"/>
<rect x="1581" y="935" width="3" height="24" rx="2" fill="#fff" opacity="0.5" filter="url(#soft2)"/>
<rect x="845" y="740" width="6.8" height="260" fill="#000"/><rect x="1611.8" y="740" width="20" height="260" fill="#000"/>
</mask></defs>
<g mask="url(#wmask)"><rect x="845" y="755" width="775" height="240" fill="#fff" filter="url(#wtex)"/></g>
<rect x="850.0" y="737.2" width="2.5" height="1.5" fill="#d0d0d0"/>
<rect x="850.0" y="758.4" width="2.5" height="1.5" fill="#d0d0d0"/>
<rect x="850.0" y="779.5" width="2.5" height="1.5" fill="#d0d0d0"/>
<rect x="850.0" y="800.5" width="2.5" height="1.5" fill="#d0d0d0"/>
<rect x="846.5" y="821.6" width="6" height="1.5" fill="#d0d0d0"/>
<rect x="850.0" y="842.8" width="2.5" height="1.5" fill="#d0d0d0"/>
<rect x="850.0" y="863.9" width="2.5" height="1.5" fill="#d0d0d0"/>
<rect x="850.0" y="885.0" width="2.5" height="1.5" fill="#d0d0d0"/>
<rect x="850.0" y="906.0" width="2.5" height="1.5" fill="#d0d0d0"/>
<rect x="846.5" y="927.1" width="6" height="1.5" fill="#d0d0d0"/>
<rect x="850.0" y="948.2" width="2.5" height="1.5" fill="#d0d0d0"/>
<rect x="850.0" y="969.4" width="2.5" height="1.5" fill="#d0d0d0"/>
<text x="820" y="828" font-family="Liberation Sans" font-size="16" font-weight="normal" font-style="normal" fill="#d6d6d6" text-anchor="start" textLength="23.5" lengthAdjust="spacingAndGlyphs">-50</text>
<text x="810" y="933.7" font-family="Liberation Sans" font-size="16" font-weight="normal" font-style="normal" fill="#d6d6d6" text-anchor="start" textLength="33.5" lengthAdjust="spacingAndGlyphs">cm/s</text>
<rect x="851.0" y="987" width="1.5" height="9" fill="#d8d8d8"/>
<rect x="890.6" y="991" width="1.5" height="5" fill="#d8d8d8"/>
<rect x="930.2" y="991" width="1.5" height="5" fill="#d8d8d8"/>
<rect x="969.8" y="991" width="1.5" height="5" fill="#d8d8d8"/>
<rect x="1009.4" y="991" width="1.5" height="5" fill="#d8d8d8"/>
<rect x="1048.9" y="987" width="1.5" height="9" fill="#d8d8d8"/>
<rect x="1088.5" y="991" width="1.5" height="5" fill="#d8d8d8"/>
<rect x="1128.1" y="991" width="1.5" height="5" fill="#d8d8d8"/>
<rect x="1167.7" y="991" width="1.5" height="5" fill="#d8d8d8"/>
<rect x="1207.3" y="991" width="1.5" height="5" fill="#d8d8d8"/>
<rect x="1246.8" y="987" width="1.5" height="9" fill="#d8d8d8"/>
<rect x="1286.4" y="991" width="1.5" height="5" fill="#d8d8d8"/>
<rect x="1326.0" y="991" width="1.5" height="5" fill="#d8d8d8"/>
<rect x="1365.6" y="991" width="1.5" height="5" fill="#d8d8d8"/>
<rect x="1405.2" y="991" width="1.5" height="5" fill="#d8d8d8"/>
<rect x="1444.8" y="987" width="1.5" height="9" fill="#d8d8d8"/>
<rect x="1484.3" y="991" width="1.5" height="5" fill="#d8d8d8"/>
<rect x="1523.9" y="991" width="1.5" height="5" fill="#d8d8d8"/>
<rect x="1563.5" y="991" width="1.5" height="5" fill="#d8d8d8"/>
<rect x="1603.1" y="991" width="1.5" height="5" fill="#d8d8d8"/>
<path d="M1611 987 L1617 1001 L1605 1001 Z" fill="#e6a224"/>
<text x="1620" y="994" font-family="Liberation Sans" font-size="15" font-weight="normal" font-style="normal" fill="#d8d8d8" text-anchor="start" textLength="51" lengthAdjust="spacingAndGlyphs">3.8 sec</text>
<path d="M865 719 C863 718 860 718.5 860 721 C860 724 868 725 869 730 C870 734 866 736 863 736 C860 736 858 734 857 732" fill="none" stroke="#e8e8e8" stroke-width="1.8"/>
<text x="891.6" y="735.4" font-family="Liberation Sans" font-size="17" font-weight="normal" font-style="normal" fill="#e8e8e8" text-anchor="start" textLength="36.9" lengthAdjust="spacingAndGlyphs">Corr</text>
<text x="935" y="735.4" font-family="Liberation Sans" font-size="17" font-weight="bold" font-style="normal" fill="#f0f0f0" text-anchor="start" textLength="26" lengthAdjust="spacingAndGlyphs">-60</text>
<text x="965.3" y="735.4" font-family="Liberation Sans" font-size="17" font-weight="bold" font-style="normal" fill="#f0f0f0" text-anchor="start" textLength="6.7" lengthAdjust="spacingAndGlyphs">°</text>
<text x="982.7" y="735.4" font-family="Liberation Sans" font-size="17" font-weight="normal" font-style="normal" fill="#e8e8e8" text-anchor="start" textLength="44.1" lengthAdjust="spacingAndGlyphs">Invert</text>
<rect x="849" y="733" width="2" height="2" fill="#ccc"/>
<text x="1123.7" y="782.4" font-family="Liberation Sans" font-size="14" font-weight="normal" font-style="normal" fill="#d8d8d8" text-anchor="start" textLength="30.7" lengthAdjust="spacingAndGlyphs">PSV</text>
<text x="1141" y="797" font-family="Liberation Sans" font-size="14" font-weight="normal" font-style="normal" fill="#d8d8d8" text-anchor="start" textLength="9" lengthAdjust="spacingAndGlyphs">9</text>
<path d="M1154 786.5 H1165 M1159.5 781 V792" stroke="#e8e8e8" stroke-width="1.5"/>
<text x="1225" y="880" font-family="Liberation Sans" font-size="14" font-weight="normal" font-style="normal" fill="#d8d8d8" text-anchor="start" textLength="31.7" lengthAdjust="spacingAndGlyphs">EDV</text>
<text x="1243" y="895" font-family="Liberation Sans" font-size="14" font-weight="normal" font-style="normal" fill="#d8d8d8" text-anchor="start" textLength="9" lengthAdjust="spacingAndGlyphs">9</text>
<path d="M1256 884.5 H1267 M1261.5 879 V890" stroke="#e8e8e8" stroke-width="1.5"/>
<path d="M1456 762 L1456.0 752.0 M1456.0 756.0 L1453.2 753.2 M1456.0 756.0 L1458.8 753.2 M1456 762 L1447.3 757.0 M1450.8 759.0 L1446.9 760.0 M1450.8 759.0 L1449.8 755.1 M1456 762 L1447.3 767.0 M1450.8 765.0 L1449.8 768.9 M1450.8 765.0 L1446.9 764.0 M1456 762 L1456.0 772.0 M1456.0 768.0 L1458.8 770.8 M1456.0 768.0 L1453.2 770.8 M1456 762 L1464.7 767.0 M1461.2 765.0 L1465.1 764.0 M1461.2 765.0 L1462.2 768.9 M1456 762 L1464.7 757.0 M1461.2 759.0 L1462.2 755.1 M1461.2 759.0 L1465.1 760.0" stroke="#b8cff0" stroke-width="1.6" fill="none"/>
</svg>
</div>
  <div class="a dl" style="left:59px;top:568px;">Image</div>
  <div class="a" style="left:235px;top:987px;width:196px;height:40px;border:2px solid #8a8a99;border-radius:8px;background:#e9e9ee;"></div>
  <div class="a dv" style="left:251px;top:998px;">Original</div><svg class="a" style="left:408px;top:1004px;" width="16" height="12" viewBox="0 0 16 12"><path d="M2 3 L8 9 L14 3" fill="none" stroke="#222" stroke-width="2.4"/></svg>
  <div class="a" style="left:39px;top:1041px;width:1356px;height:2px;background:#cdcdcd;"></div>
  <div class="a" style="left:39px;top:1088px;width:1356px;height:2px;background:#cdcdcd;"></div>
  <div class="a" style="left:39px;top:1134px;width:1356px;height:2px;background:#cdcdcd;"></div>
  <div class="a dl" style="left:59px;top:1052px;">Quality</div>
  <div class="a dv" style="left:235px;top:1052px;">usable</div>
  <div class="a dl" style="left:59px;top:1099px;">Start Time</div>
  <div class="a dv" style="left:235px;top:1099px;">14:15:10</div>
  <div class="a dl" style="left:59px;top:1145px;">Series Desc</div>
  <div class="a dv" style="left:235px;top:1145px;">Carotid</div>
  </div><div class="a" style="left:0;top:1172px;width:1436px;height:99px;background:#f0f0f0;border-top:2px solid #ddd;"></div><div class="a" style="left:1px;top:1px;">
  <div class="a dv" style="left:29px;top:1209px;">Click in the header to move this dialog around the page</div>
  <div class="a" style="left:1284px;top:1192px;width:117px;height:55px;border:2px solid #2b5c98;border-radius:7px;background:linear-gradient(#5993cc,#3571b4);box-shadow:0 2px 2px rgba(0,0,0,0.2);"></div>
  <div class="a" style="left:1310px;top:1208px;font-size:27px;line-height:27px;color:#fff;">Close</div>
</div></div>
</body></html>
